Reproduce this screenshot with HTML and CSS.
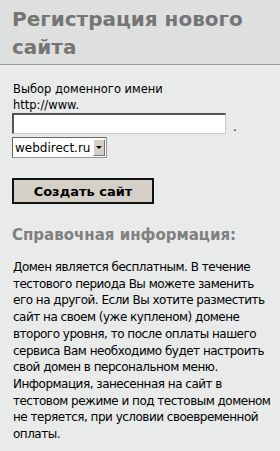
FILE: index.html
```html
<!DOCTYPE html>
<html lang="ru">
<head>
    <meta charset="UTF-8">
    <title>Регистрация нового сайта</title>
    <link rel="stylesheet" href="styles.css">
</head>
<body>
    <div class="header">
        <h1>Регистрация нового сайта</h1>
    </div>

    <div class="content">
        <form class="reg-form">
            <div class="field-label">Выбор доменного имени</div>
            <div class="field-label">http://www.</div>
            <div class="domain-row">
                <input type="text" class="domain-input">
                <span class="dot">.</span>
            </div>
            <div class="zone-box">
                <select class="zone-select">
                    <option>webdirect.ru</option>
                </select>
                <span class="zone-arrow"></span>
            </div>
            <button type="button" class="create-btn">Создать сайт</button>
        </form>

        <h2>Справочная информация:</h2>
        <p class="info">Домен является бесплатным. В течение тестового периода Вы можете заменить его на другой. Если Вы хотите разместить сайт на своем (уже купленом) домене второго уровня, то после оплаты нашего сервиса Вам необходимо будет настроить свой домен в персональном меню. Информация, занесенная на сайт в тестовом режиме и под тестовым доменом не теряется, при условии своевременной оплаты.</p>
    </div>
</body>
</html>
```

FILE: styles.css
```css
body {
    margin: 0;
    font-family: Tahoma, "DejaVu Sans", sans-serif;
    font-size: 11.5px;
    color: #000;
    background-color: #e8ebea;
}
.header {
    background-color: #dde0df;
    border-bottom: 1px solid #999;
    padding: 5px 12px 3px;
}
.header h1 {
    margin: 0;
    font-size: 20px;
    line-height: 28px;
    color: #757575;
}
.content {
    padding: 16px 0 20px 13px;
}
.field-label {
    line-height: 16px;
}
.domain-row {
    display: flex;
    align-items: flex-end;
}
.domain-input {
    width: 214px;
    height: 21px;
    box-sizing: border-box;
    margin: 0 0 0 -1px;
    border: 1px solid #ccc;
    border-top: 2px solid #555;
    border-left: 2px solid #555;
    background: #fff;
}
.dot {
    margin-left: 7px;
    line-height: 14px;
}
.zone-box {
    display: flex;
    width: 95px;
    height: 21px;
    margin: 3px 0 0 -1px;
    box-sizing: border-box;
    border: 1px solid #999;
    border-top-color: #666;
    border-left-color: #666;
    background: #fff;
}
.zone-select {
    flex: 1;
    min-width: 0;
    appearance: none;
    -webkit-appearance: none;
    margin: 0;
    padding: 0 0 0 2px;
    border: none;
    font-family: inherit;
    font-size: 12px;
    color: #000;
    background: #fff;
}
.zone-arrow {
    width: 12px;
    margin: 1px;
    box-sizing: border-box;
    background-color: #d4d0c8;
    border: 1px solid #fff;
    border-right-color: #777;
    border-bottom-color: #777;
    display: flex;
    align-items: center;
    justify-content: center;
}
.zone-arrow::after {
    content: "";
    border-left: 3px solid transparent;
    border-right: 3px solid transparent;
    border-top: 3px solid #000;
}
.create-btn {
    display: block;
    margin: 20px 0 0 -1px;
    width: 142px;
    height: 26px;
    font-family: inherit;
    font-size: 13px;
    font-weight: bold;
    background-color: #d4d0c8;
    border: 2px solid #111;
    border-radius: 0;
}
h2 {
    margin: 22px 0 0 -1px;
    font-size: 15px;
    line-height: 18px;
    color: #808080;
}
.info {
    margin: 15px 0 0;
    padding-right: 4px;
    line-height: 16.7px;
    font-size: 12px;
    letter-spacing: -0.5px;
}
```
